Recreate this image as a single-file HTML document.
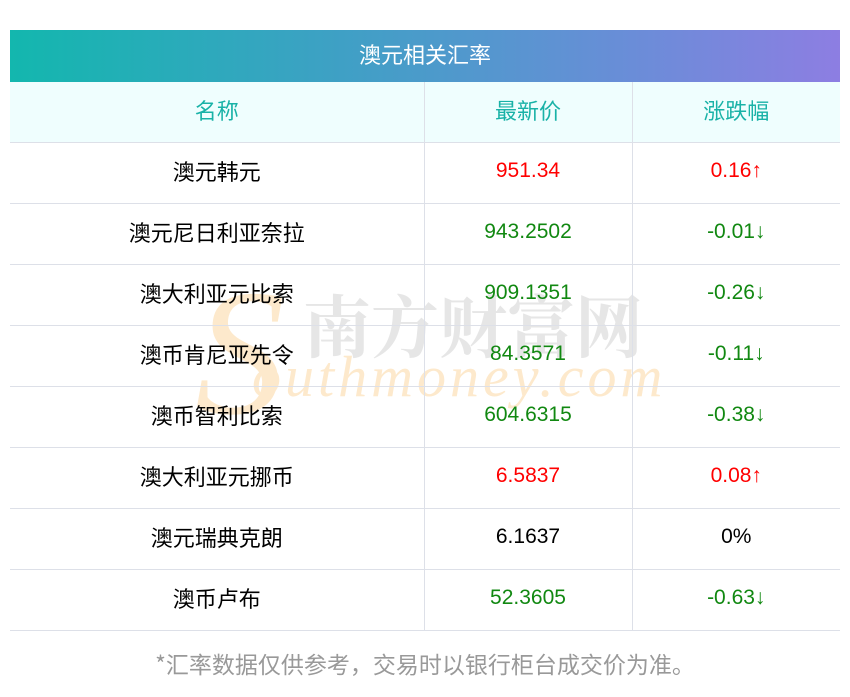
<!DOCTYPE html>
<html><head><meta charset="utf-8"><style>
body{margin:0;width:850px;height:697px;background:#fff;font-family:"Liberation Sans","Noto Sans CJK SC",sans-serif;position:relative;overflow:hidden}
.title{position:absolute;left:10px;top:30px;width:830px;height:52px;background:linear-gradient(90deg,#13b7ae,#3fa0c5 40%,#6a8dd8 75%,#8d7ee2);color:#fff;font-size:22px;line-height:48px;text-align:center;font-family:"Noto Sans CJK SC",sans-serif}
table{position:absolute;left:10px;top:82px;width:830px;border-collapse:collapse;font-size:21px;z-index:2;table-layout:fixed}
td,th{height:56px;text-align:center;border-bottom:1px solid #dde0e8;font-weight:normal;padding:0 0 4px 0;line-height:24px}
td:first-child{font-family:"Noto Sans CJK SC",sans-serif;font-size:22px}
th{background:#effefe;color:#19b2a7;font-size:22px;font-family:"Noto Sans CJK SC",sans-serif}
td+td,th+th{border-left:1px solid #dde0e8}
.r{color:#f00}.g{color:#118811}
.wm1{position:absolute;left:303px;top:283px;font-size:68px;color:#dcdcdc;opacity:.7;z-index:1;font-family:"Noto Serif CJK SC",serif;font-weight:bold;line-height:1.2}
.wm2{position:absolute;left:252px;top:343px;font-size:58px;color:#fde9cc;font-style:italic;font-family:"Liberation Serif",serif;z-index:1;letter-spacing:4px}
.wmS{position:absolute;left:195px;top:263px;font-size:180px;color:#fde9cc;font-style:italic;font-family:"Liberation Serif",serif;z-index:1;line-height:1}
.foot{position:absolute;top:646px;width:850px;text-align:center;color:#999;font-size:23px;font-family:"Noto Sans CJK SC",sans-serif}
</style></head><body>
<div class="title">澳元相关汇率</div>
<div class="wmS">S</div>
<div class="wm1">南方财富网</div>
<div class="wm2">outhmoney.com</div>
<table>
<colgroup><col style="width:414px"><col style="width:208px"><col style="width:208px"></colgroup>
<tr><th>名称</th><th>最新价</th><th>涨跌幅</th></tr>
<tr><td>澳元韩元</td><td class="r">951.34</td><td class="r">0.16↑</td></tr>
<tr><td>澳元尼日利亚奈拉</td><td class="g">943.2502</td><td class="g">-0.01↓</td></tr>
<tr><td>澳大利亚元比索</td><td class="g">909.1351</td><td class="g">-0.26↓</td></tr>
<tr><td>澳币肯尼亚先令</td><td class="g">84.3571</td><td class="g">-0.11↓</td></tr>
<tr><td>澳币智利比索</td><td class="g">604.6315</td><td class="g">-0.38↓</td></tr>
<tr><td>澳大利亚元挪币</td><td class="r">6.5837</td><td class="r">0.08↑</td></tr>
<tr><td>澳元瑞典克朗</td><td>6.1637</td><td>0%</td></tr>
<tr><td>澳币卢布</td><td class="g">52.3605</td><td class="g">-0.63↓</td></tr>
</table>
<div class="foot">*汇率数据仅供参考，交易时以银行柜台成交价为准。</div>
</body></html>
